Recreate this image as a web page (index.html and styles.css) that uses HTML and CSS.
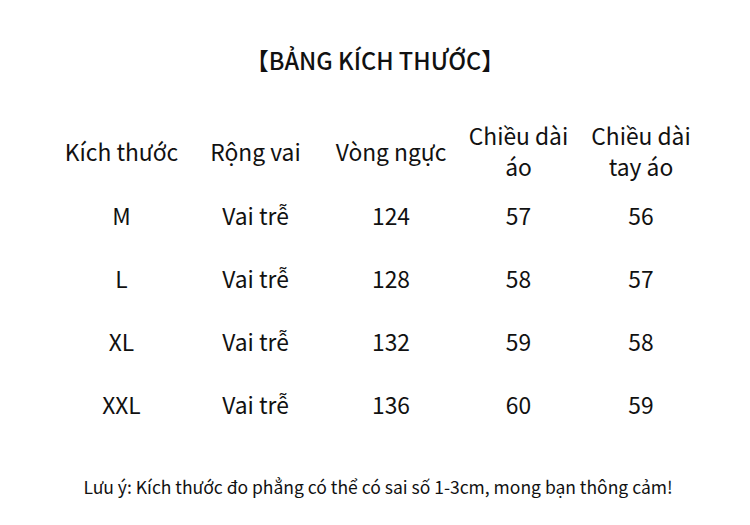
FILE: index.html
```html
<!DOCTYPE html>
<html lang="vi">
<head>
<meta charset="utf-8">
<link rel="stylesheet" href="styles.css">
</head>
<body>
<div class="page">
  <h1 class="title">【BẢNG KÍCH THƯỚC】</h1>
  <div class="table">
    <div class="cell head">Kích thước</div>
    <div class="cell head">Rộng vai</div>
    <div class="cell head">Vòng ngực</div>
    <div class="cell head">Chiều dài<br>áo</div>
    <div class="cell head">Chiều dài<br>tay áo</div>

    <div class="cell">M</div>
    <div class="cell">Vai trễ</div>
    <div class="cell">124</div>
    <div class="cell">57</div>
    <div class="cell">56</div>

    <div class="cell">L</div>
    <div class="cell">Vai trễ</div>
    <div class="cell">128</div>
    <div class="cell">58</div>
    <div class="cell">57</div>

    <div class="cell">XL</div>
    <div class="cell">Vai trễ</div>
    <div class="cell">132</div>
    <div class="cell">59</div>
    <div class="cell">58</div>

    <div class="cell">XXL</div>
    <div class="cell">Vai trễ</div>
    <div class="cell">136</div>
    <div class="cell">60</div>
    <div class="cell">59</div>
  </div>
  <p class="note">Lưu ý: Kích thước đo phẳng có thể có sai số 1-3cm, mong bạn thông cảm!</p>
</div>
</body>
</html>
```
FILE: styles.css
```css
html, body {
  margin: 0;
  padding: 0;
  background: #ffffff;
}
body {
  width: 750px;
  height: 525px;
  overflow: hidden;
  font-family: "Noto Sans CJK SC", "Noto Sans", sans-serif;
  color: #111111;
}
.page {
  display: flex;
  flex-direction: column;
  align-items: center;
  padding-top: 42px;
}
.title {
  margin: 0;
  font-size: 23.5px;
  font-weight: 500;
  line-height: 36px;
  letter-spacing: 0;
}
.table {
  margin-top: 40px;
  display: grid;
  grid-template-columns: 135px 133px 138px 117px 128px;
  grid-template-rows: 66px repeat(4, 63px);
  margin-left: 9px;
}
.cell {
  display: flex;
  align-items: center;
  justify-content: center;
  text-align: center;
  font-size: 22.8px;
  line-height: 31px;
}
.note {
  margin: 38px 0 0;
  font-size: 17.5px;
  line-height: 26px;
  margin-left: 6px;
}
```
